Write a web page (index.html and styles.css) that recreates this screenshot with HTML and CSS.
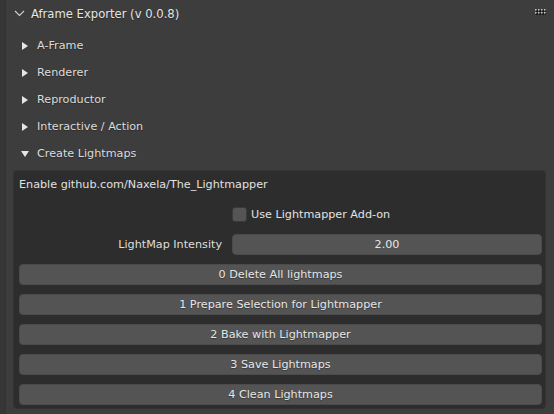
FILE: index.html
```html
<!DOCTYPE html>
<html>
<head>
<meta charset="utf-8">
<link rel="stylesheet" href="styles.css">
</head>
<body>
<div class="app">
  <div class="viewport"></div>
  <div class="panel">
    <div class="header">
      <svg class="chev" width="11" height="7" viewBox="0 0 11 7"><path d="M1 1 L5.5 5.5 L10 1" fill="none" stroke="#cfcfcf" stroke-width="1.1"/></svg>
      <span class="title">Aframe Exporter (v 0.0.8)</span>
      <svg class="grip" width="11" height="6" viewBox="0 0 11 6">
        <g fill="#1a1a1a"><rect x="1" y="1" width="2" height="2"/><rect x="4" y="1" width="2" height="2"/><rect x="7" y="1" width="2" height="2"/><rect x="10" y="1" width="1" height="2"/><rect x="1" y="4" width="2" height="2"/><rect x="4" y="4" width="2" height="2"/><rect x="7" y="4" width="2" height="2"/><rect x="10" y="4" width="1" height="2"/></g>
        <g fill="#c8c8c8"><rect x="0" y="0" width="1.5" height="1.5"/><rect x="3" y="0" width="1.5" height="1.5"/><rect x="6" y="0" width="1.5" height="1.5"/><rect x="9" y="0" width="1.5" height="1.5"/><rect x="0" y="3" width="1.5" height="1.5"/><rect x="3" y="3" width="1.5" height="1.5"/><rect x="6" y="3" width="1.5" height="1.5"/><rect x="9" y="3" width="1.5" height="1.5"/></g>
      </svg>
    </div>
    <div class="sub"><span class="tri-r"></span><span>A-Frame</span></div>
    <div class="sub"><span class="tri-r"></span><span>Renderer</span></div>
    <div class="sub"><span class="tri-r"></span><span>Reproductor</span></div>
    <div class="sub"><span class="tri-r"></span><span>Interactive / Action</span></div>
    <div class="sub"><span class="tri-d"></span><span>Create Lightmaps</span></div>
    <div class="box">
      <div class="row text">Enable github.com/Naxela/The_Lightmapper</div>
      <div class="row split">
        <span></span>
        <label class="check"><span class="cb"></span><span>Use Lightmapper Add-on</span></label>
      </div>
      <div class="row split">
        <span class="lbl">LightMap Intensity</span>
        <div class="field">2.00</div>
      </div>
      <div class="row btn">0 Delete All lightmaps</div>
      <div class="row btn">1 Prepare Selection for Lightmapper</div>
      <div class="row btn">2 Bake with Lightmapper</div>
      <div class="row btn">3 Save Lightmaps</div>
      <div class="row btn">4 Clean Lightmaps</div>
    </div>
  </div>
</div>
</body>
</html>
```
FILE: styles.css
```css
html, body {
  margin: 0;
  padding: 0;
  background: #3d3d3d;
}
body {
  font-family: "DejaVu Sans", sans-serif;
  font-size: 11.2px;
  color: #e2e2e2;
  width: 554px;
  height: 414px;
  overflow: hidden;
}
.app {
  display: flex;
  height: 414px;
}
.viewport {
  width: 5px;
  background: #363636;
  border-right: 1px solid #333;
}
.panel {
  flex: 1;
  display: flex;
  flex-direction: column;
  background: #3d3d3d;
}
.header {
  height: 27px;
  display: flex;
  align-items: center;
  padding-left: 8px;
  padding-right: 8px;
  margin-bottom: 5px;
}
.chev {
  margin-right: 6px;
  margin-top: -1px;
}
.title {
  color: #e6e6e6;
  font-size: 11.6px;
  text-shadow: 0 1px 1px rgba(0,0,0,0.35);
  flex: 1;
}
.grip {
  margin-top: -3px;
}
.sub {
  height: 27px;
  display: flex;
  align-items: center;
  padding-left: 15px;
  color: #dcdcdc;
  text-shadow: 0 1px 1px rgba(0,0,0,0.3);
}
.tri-r {
  width: 0;
  height: 0;
  border-top: 4px solid transparent;
  border-bottom: 4px solid transparent;
  border-left: 6px solid #e6e6e6;
  margin-left: 1px;
  margin-right: 9px;
}
.tri-d {
  width: 0;
  height: 0;
  border-left: 4px solid transparent;
  border-right: 4px solid transparent;
  border-top: 6px solid #e6e6e6;
  margin-right: 8px;
}
.box {
  margin: 3px 8px 0 7px;
  background: #2d2d2d;
  border: 1px solid #333;
  border-radius: 4px;
  padding: 3px 3px 3px 5px;
  display: flex;
  flex-direction: column;
  gap: 9px;
}
.row {
  height: 21px;
  display: flex;
  align-items: center;
}
.text {
  color: #e0e0e0;
}
.split {
  display: grid;
  grid-template-columns: 213px 1fr;
  align-items: center;
}
.lbl {
  text-align: right;
  padding-right: 10px;
  color: #dedede;
}
.check {
  display: flex;
  align-items: center;
  gap: 4px;
}
.cb {
  background: #555;
  border: 1px solid #3a3a3a;
  border-radius: 3px;
  box-sizing: border-box;
  width: 15px;
  height: 15px;
}
.field {
  height: 21px;
  background: #545454;
  border: 1px solid #4a4a4a;
  border-radius: 4px;
  box-sizing: border-box;
  display: flex;
  align-items: center;
  justify-content: center;
  color: #e6e6e6;
}
.btn {
  background: #545454;
  border: 1px solid #4b4b4b;
  border-radius: 4px;
  box-sizing: border-box;
  justify-content: center;
  color: #e6e6e6;
  text-shadow: 0 1px 1px rgba(0,0,0,0.35);
}
```
